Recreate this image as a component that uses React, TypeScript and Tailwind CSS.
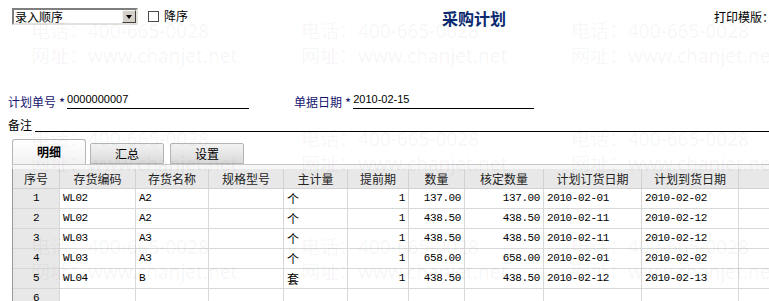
import React from "react";

const cols = [47, 76, 73, 75, 64, 61, 56, 79, 98, 97];
const headers = ["序号", "存货编码", "存货名称", "规格型号", "主计量", "提前期", "数量", "核定数量", "计划订货日期", "计划到货日期"];

const rows = [
  ["1", "WL02", "A2", "", "个", "1", "137.00", "137.00", "2010-02-01", "2010-02-02"],
  ["2", "WL02", "A2", "", "个", "1", "438.50", "438.50", "2010-02-11", "2010-02-12"],
  ["3", "WL03", "A3", "", "个", "1", "438.50", "438.50", "2010-02-11", "2010-02-12"],
  ["4", "WL03", "A3", "", "个", "1", "658.00", "658.00", "2010-02-01", "2010-02-02"],
  ["5", "WL04", "B", "", "套", "1", "438.50", "438.50", "2010-02-12", "2010-02-13"],
  ["6", "", "", "", "", "", "", "", "", ""],
];

// columns whose values sit on the right
const rightCols = [5, 6, 7];

function Watermark() {
  const tiles = [];
  for (let j = 0; j < 3; j++) {
    for (let i = 0; i < 3; i++) {
      tiles.push(
        <div
          key={`${i}-${j}`}
          className="absolute whitespace-nowrap text-[19px] leading-[25px] text-black/[0.05] font-['Noto_Sans','Noto_Sans_CJK_SC',sans-serif]"
          style={{ left: 31 + i * 270, top: 19 + j * 108 }}
        >
          <div>电话：400-665-0028</div>
          <div>网址：www.chanjet.net</div>
        </div>
      );
    }
  }
  return <div className="pointer-events-none absolute inset-0 overflow-hidden">{tiles}</div>;
}

function Field({ label, value, width }: { label: string; value: string; width: number }) {
  return (
    <div className="flex items-end whitespace-nowrap">
      <span className="text-[12px] leading-[14px] text-[#14146e]">{label}</span>
      <span className="ml-[3px] text-[13px] leading-[12px] text-[#14146e]">*</span>
      <div
        className="ml-[2px] h-[15px] border-b border-black text-[11px] leading-[11px] font-['Liberation_Sans',sans-serif]"
        style={{ width }}
      >
        {value}
      </div>
    </div>
  );
}

export default function App() {
  return (
    <div className="relative h-[301px] w-[769px] overflow-hidden bg-white text-black font-['Noto_Sans_CJK_SC',sans-serif]">
      {/* toolbar */}
      <div className="flex h-[25px] items-start whitespace-nowrap pl-[12px] pt-[8px]">
        <div className="flex h-[17px] w-[126px] shrink-0 items-center justify-between border-2 border-t-[#7f7f7f] border-l-[#7f7f7f] border-b-[#e4e2dc] border-r-[#e4e2dc] bg-white">
          <span className="pl-[1px] text-[12px] leading-[13px]">录入顺序</span>
          <span className="flex h-[13px] w-[14px] items-center justify-center border border-t-[#f4f4f4] border-l-[#f4f4f4] border-b-[#404040] border-r-[#404040] bg-[#d4d0c8]">
            <span className="h-0 w-0 border-x-[3.5px] border-t-[4px] border-x-transparent border-t-black" />
          </span>
        </div>
        <div className="ml-[10px] mt-[3px] h-[11px] w-[11px] shrink-0 border border-[#4a4a4a] bg-white" />
        <span className="ml-[5px] mt-[1px] shrink-0 text-[12px] leading-[14px]">降序</span>
        <span className="ml-[254px] mt-[1px] shrink-0 text-[16px] font-bold leading-[18px] text-[#0b2a6e]">采购计划</span>
        <span className="ml-[208px] mt-[2px] shrink-0 text-[12px] leading-[14px]">打印模版：</span>
      </div>

      {/* header fields */}
      <div className="mt-[69px] flex items-end pl-[8px]">
        <Field label="计划单号" value="0000000007" width={182} />
        <div className="ml-[45px]">
          <Field label="单据日期" value="2010-02-15" width={181} />
        </div>
      </div>
      <div className="mt-[9px] flex items-end pl-[8px]">
        <span className="text-[12px] leading-[14px]">备注</span>
        <div className="ml-[3px] h-[14px] flex-1 border-b border-black" />
      </div>

      {/* tabs */}
      <div className="mt-[7px] flex items-end pl-[12px] text-[12px]">
        <div className="flex h-[25px] w-[74px] items-center justify-center rounded-t-[3px] border border-b-0 border-[#b5b5b5] bg-gradient-to-b from-white to-[#f2f2f2] font-bold">
          明细
        </div>
        <div className="ml-[4px] flex h-[21px] w-[74px] items-center justify-center rounded-t-[2px] border border-[#b5b5b5] bg-gradient-to-b from-[#f3f3f3] to-[#d9d9d9]">
          汇总
        </div>
        <div className="ml-[6px] flex h-[21px] w-[74px] items-center justify-center rounded-t-[2px] border border-[#b5b5b5] bg-gradient-to-b from-[#f3f3f3] to-[#d9d9d9]">
          设置
        </div>
      </div>
      <div className="ml-[12px] h-[5px] border-l border-t border-[#c8c8c8] bg-[#f7f7f7]" />

      {/* grid */}
      <div className="ml-[12px] border-l border-[#9a9a9a] text-[12px]">
        <div className="flex h-[20px] bg-[#e8e8e8]">
          {headers.map((h, i) => (
            <div
              key={h}
              className="flex shrink-0 items-center justify-center border-b border-r border-[#d2d2d2] text-[#222]"
              style={{ width: cols[i] }}
            >
              {h}
            </div>
          ))}
          <div className="flex-1 border-b border-[#d2d2d2]" />
        </div>
        {rows.map((r) => (
          <div key={r[0]} className="flex h-[20px]">
            {r.map((v, i) => (
              <div
                key={i}
                className={`flex shrink-0 items-center border-b border-r border-[#d8d8d8] px-[3px] ${
                  i === 0 ? "justify-center bg-[#e8e8e8]" : rightCols.includes(i) ? "justify-end" : "justify-start"
                } ${/[0-9A-Z]/.test(v) ? "text-[11px] font-['Liberation_Mono','Noto_Sans_CJK_SC',monospace] tracking-[-0.4px]" : ""}`}
                style={{ width: cols[i] }}
              >
                {v}
              </div>
            ))}
            <div className="flex-1 border-b border-[#d8d8d8]" />
          </div>
        ))}
      </div>

      <Watermark />
    </div>
  );
}
